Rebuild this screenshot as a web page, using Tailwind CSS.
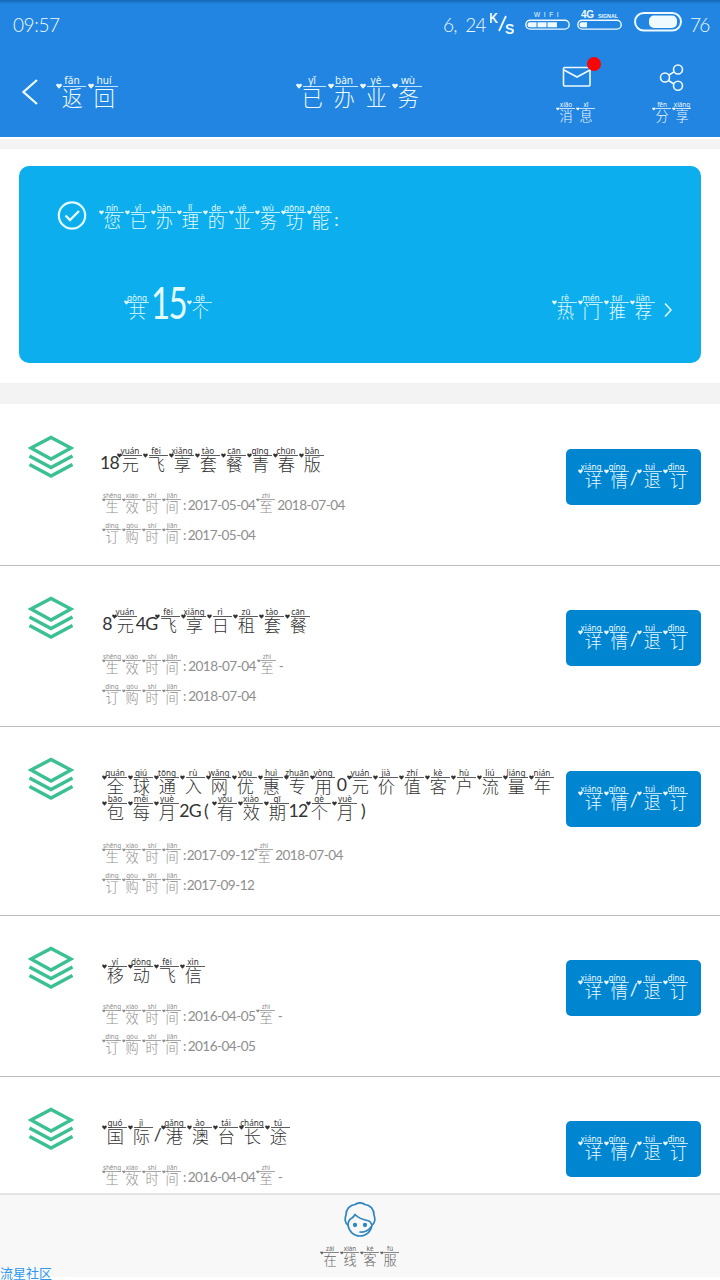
<!DOCTYPE html>
<html lang="zh-CN">
<head>
  <meta charset="UTF-8">
  <meta name="viewport" content="width=device-width, initial-scale=1.0">
  <title>已办业务</title>
  <script src="https://cdn.jsdelivr.net/npm/@tailwindcss/browser@4"></script>
</head>
<body class="bg-white">
  <div class="w-[720px] h-[1280px] flex flex-col overflow-hidden relative font-['Lato','Noto_Sans_CJK_SC',sans-serif] font-light">

    <!-- 顶部 -->
    <header class="h-[137px] shrink-0 bg-[linear-gradient(#1867b2,#2185e1_4px)] text-[#effaff]">
      <!-- 状态栏 -->
      <div class="h-12 pl-[13px] pr-3 flex items-center justify-between text-[19px]">
        <span class="tracking-[-0.4px] pt-0.5">09:57</span>
        <div class="flex items-center">
          <span class="pt-0.5 w-[47px] whitespace-pre tracking-[-0.8px]">6,  24</span>
          <svg class="w-6 h-7 -mt-1" viewBox="0 0 24 28" fill="none" stroke="currentColor" stroke-width="1.8">
            <path d="M16 8L9 23" />
            <text x="-1" y="15" font-size="14" font-weight="700" font-family="Liberation Sans" fill="currentColor" stroke="none" textLength="9" lengthAdjust="spacingAndGlyphs">K</text>
            <text x="15" y="26" font-size="14" font-weight="700" font-family="Liberation Sans" fill="currentColor" stroke="none">S</text>
          </svg>
          <svg class="w-[45px] h-6 ml-[11px] -mt-3" viewBox="0 0 45 24">
            <text x="9" y="11" font-size="6.5" letter-spacing="3.6" font-weight="400" font-family="Liberation Sans" fill="currentColor">WIFI</text>
            <rect x="0.8" y="14.3" width="43.4" height="8.8" rx="4.4" fill="none" stroke="currentColor" stroke-width="1.4" />
            <path d="M5 16.2h6.500v5H5a2.500 2.500 0 010-5zM12.500 16.200h9v5h-9zM22.500 16.200h9.500v5h-9.500z" fill="currentColor" />
          </svg>
          <svg class="w-[45px] h-6 ml-[7px] -mt-3" viewBox="0 0 45 24">
            <text x="4" y="12" font-size="10" font-weight="700" font-family="Liberation Sans" fill="currentColor" textLength="13">4G</text>
            <text x="21" y="11.500" font-size="6" font-weight="700" font-family="Liberation Sans" fill="currentColor" textLength="20" lengthAdjust="spacingAndGlyphs">SIGNAL</text>
            <rect x="0.8" y="14.3" width="43.4" height="8.8" rx="4.4" fill="none" stroke="currentColor" stroke-width="1.4" />
            <path d="M5 16.200h5v5H5a2.500 2.500 0 010-5z" fill="currentColor" />
          </svg>
          <svg class="w-12 h-5 ml-3 -mt-1" viewBox="0 0 48 20">
            <rect x="1" y="1" width="46" height="17.500" rx="8.750" fill="none" stroke="currentColor" stroke-width="2" />
            <rect x="15" y="3.500" width="28" height="12.500" rx="5" fill="currentColor" />
          </svg>
          <span class="pt-0.5 ml-2 w-[18px] tracking-[-1.8px]">76</span>
        </div>
      </div>
      <!-- 导航栏 -->
      <div class="flex h-[89px]">
        <svg class="w-4 h-7 mt-[30px] ml-[22px] shrink-0" viewBox="0 0 16 28" fill="none" stroke="currentColor" stroke-width="2.200"><path d="M15 2L1.500 14L15 26" /></svg>
        <div class="text-[32px] mt-[29px] ml-[18px] w-[240px]" data-py="返fǎn回huí"></div>
        <div class="text-[32px] mt-[29px] w-[260px]" data-py="已yǐ办bàn业yè务wù"></div>
        <div class="w-24 flex flex-col">
          <div class="relative w-[46px] h-[55px] pt-[18px] pl-[6px]">
            <svg class="w-[30px] h-[22px]" viewBox="0 0 30 22" fill="none" stroke="currentColor" stroke-width="1.600"><rect x="1.500" y="1.500" width="26.500" height="18.500" rx="1" /><path d="M2 4L15 11L28 4" /></svg>
            <i class="absolute left-[31px] top-[9px] size-[14px] rounded-full bg-[#f80505]"></i>
          </div>
          <div class="text-[20px]" data-py="消xiāo息xī"></div>
        </div>
        <div class="flex flex-col">
          <div class="h-[55px] pt-4 pl-[7px]">
            <svg class="w-[26px] h-7" viewBox="0 0 26 28" fill="none" stroke="currentColor" stroke-width="1.600"><circle cx="6" cy="13.500" r="4.500" /><circle cx="19" cy="5.500" r="4.500" /><circle cx="19" cy="21.700" r="4.500" /><path d="M10 11L15 7.800M9.500 16.500L15 20" /></svg>
          </div>
          <div class="text-[20px]" data-py="分fēn享xiǎng"></div>
        </div>
      </div>
    </header>

    <div class="h-2.5 mt-0.5 bg-[#f3f3f3] shrink-0"></div>

    <!-- 概览卡片 -->
    <section class="mx-[19px] mt-[17px] mb-5 h-[197px] shrink-0 rounded-[10px] bg-[#0caeee] text-[#e4fbff]">
      <div class="flex pt-[34px] pl-[38px]">
        <svg class="size-[30px]" viewBox="0 0 30 30" fill="none" stroke="currentColor"><circle cx="15" cy="15.500" r="13.200" stroke-width="2.200" /><path d="M8.500 15.500L13 20L22 11" stroke-width="2.400" /></svg>
        <div class="text-[26px] ml-3 mt-[5px]" data-py="您nín已yǐ办bàn理lǐ的de业yè务wù功gōng能néng{:|6}"></div>
      </div>
      <div class="flex h-[42px] mt-[49px] pl-[105px] items-start">
        <div class="text-[26px] mt-[15px]" data-py="共gòng"></div>
        <div class="w-[37px] flex justify-center text-[44px] leading-[44px] font-normal"><span class="scale-x-75 tracking-[-2px]">15</span></div>
        <div class="text-[26px] mt-[15px]" data-py="个gè"></div>
        <div class="text-[26px] mt-[15px] ml-[339px]" data-py="热rè门mén推tuī荐jiàn"></div>
        <svg class="w-2 h-4 mt-[22px] ml-2" viewBox="0 0 8 16" fill="none" stroke="currentColor" stroke-width="1.600"><path d="M1 1.500L7 8L1 14.500" /></svg>
      </div>
    </section>

    <div class="h-[21px] bg-[#f3f3f3] shrink-0"></div>

    <!-- 业务列表 -->
    <main id="service-list" class="h-[789px] overflow-hidden shrink-0 pt-px"></main>

    <!-- 在线客服 -->
    <footer class="h-[84px] shrink-0 bg-[#f8f8f8] border-t-2 border-[#e4e4e4] flex flex-col items-center">
      <svg class="w-8 h-[35px] mt-[7px]" viewBox="0 0 32 35" fill="none" stroke="#2f86bf" stroke-width="1.700" stroke-linecap="round" stroke-linejoin="round">
        <path d="M4 23C1 21.500 0.500 17 2 13C2 7 6 3 11 2.500C14 0.500 18 0.500 21 2.500C26 3 30 7 30 13C31.500 17 31 21.500 28 23" />
        <path d="M4 23C4 19 6 17 8 16C10 14.500 10.500 13.500 11 12.500C15 17 20 18 25 19C27 20 27.500 22 28 23C27 30 22 34 16 34C10 34 5 30 4 23Z" />
        <path d="M16 30C20 30.500 24 29 27 25" />
        <circle cx="11" cy="23" r="1.300" fill="#2f86bf" /><circle cx="21" cy="23" r="1.300" fill="#2f86bf" />
      </svg>
      <div class="text-[20px] text-[#666] mt-[10px]" data-py="在zài线xiàn客kè服fú"></div>
    </footer>

    <span class="absolute left-0 bottom-0 text-[13px] leading-[13px] text-[#2c97ee] font-normal">流星社区</span>
  </div>

  <script>
    // {文字|宽度} 为不带拼音的片段
    const services = [
      { name: '{18|15}元yuán飞fēi享xiǎng套tào餐cān青qīng春chūn版bǎn', valid: '{:|5}{2017-05-04|69}至zhì{2018-07-04|70}', order: '{:|5}{2017-05-04|69}' },
      { name: '{8|10}元yuán{4G|17}飞fēi享xiǎng日rì租zū套tào餐cān', valid: '{:|5}{2018-07-04|70}至zhì{-|8}', order: '{:|5}{2018-07-04|70}' },
      { name: '全quán球qiú通tōng入rù网wǎng优yōu惠huì专zhuān用yòng{0|11}元yuán价jià值zhí客kè户hù流liú量liáng年nián包bāo每měi月yuè{2G|20}{(|12}有yǒu效xiào期qī{12|16}个gè月yuè{)|10}', valid: '{:|5}{2017-09-12|67}至zhì{2018-07-04|70}', order: '{:|5}{2017-09-12|67}', tall: true },
      { name: '移yí动dòng飞fēi信xìn', valid: '{:|5}{2016-04-05|69}至zhì{-|8}', order: '{:|5}{2016-04-05|69}' },
      { name: '国guó际jì{/|7}港gǎng澳ào台tái长cháng途tú', valid: '{:|5}{2016-04-04|69}至zhì{-|8}' },
    ];

    document.getElementById('service-list').innerHTML = services.map(s => `
      <div class="flex items-start border-b border-[#bcbcbc] pl-[28px] pr-[19px] ${s.tall ? 'h-[189px]' : 'h-[161px]'}">
        <svg class="w-[46px] h-[46px] mt-[28px] shrink-0" viewBox="0 0 46 46" fill="none" stroke="#3ac092" stroke-width="3.400">
          <path d="M3 15L23 4.500L43 15L23 26Z" /><path d="M1.500 23L23 34.500L44.500 23" /><path d="M1.500 31.500L23 43L44.500 31.500" />
        </svg>
        <div class="ml-[28px] w-[464px] pt-[43px]">
          <div class="text-[26px] text-[#333] ${s.tall ? 'mb-[22px]' : 'mb-5'}" data-py="${s.name}"></div>
          <div class="text-[20px] text-[#8e8e8e] mb-2.5" data-py="生shēng效xiào时shí间jiān${s.valid}"></div>
          ${s.order ? `<div class="text-[20px] text-[#8e8e8e]" data-py="订dìng购gòu时shí间jiān${s.order}"></div>` : ''}
        </div>
        <button class="w-[135px] h-14 mt-[44px] pl-3 rounded-[5px] bg-[#0085d0] text-[26px] text-[#e9f9ff] shrink-0" data-py="详xiáng情qíng{/|7}退tuì订dìng"></button>
      </div>
    `).join('');

    // 渲染拼音
    function renderPinyin(el) {
      const cells = [...el.dataset.py.matchAll(/\{(.+?)\|(\d+)\}|(\p{Script=Han})(\p{Ll}+)/gu)].map(([, text, width, han, py]) => han ? `
        <span class="relative block w-[1em] h-[1em]">
          <svg class="absolute left-0 top-[.2em] size-[.19em]" viewBox="0 0 10 10" fill="currentColor"><path d="M5 9.500L0.500 4.500C-0.500 1 3.500 0 5 2.500C6.500 0 10.500 1 9.500 4.500Z" /></svg>
          <span class="flex justify-center whitespace-nowrap text-[.315em] h-[.857em] leading-[.65em] font-['Noto_Sans'] font-normal">${py}</span>
          <span class="block h-px w-[.73em] ml-[.22em] bg-current opacity-80"></span>
          <span class="block text-[.66em] leading-[1em] ml-[.27em] mt-[.02em]">${han}</span>
        </span>` : `
        <span class="flex justify-center h-[1em]" style="width:${width}px"><span class="block whitespace-nowrap text-[.68em] leading-[1em] pt-[.35em] tracking-[-.04em] font-normal">${text}</span></span>`
      ).join('');
      el.innerHTML = `<span class="flex flex-wrap">${cells}</span>`;
    }

    document.querySelectorAll('[data-py]').forEach(renderPinyin);
  </script>
</body>
</html>
